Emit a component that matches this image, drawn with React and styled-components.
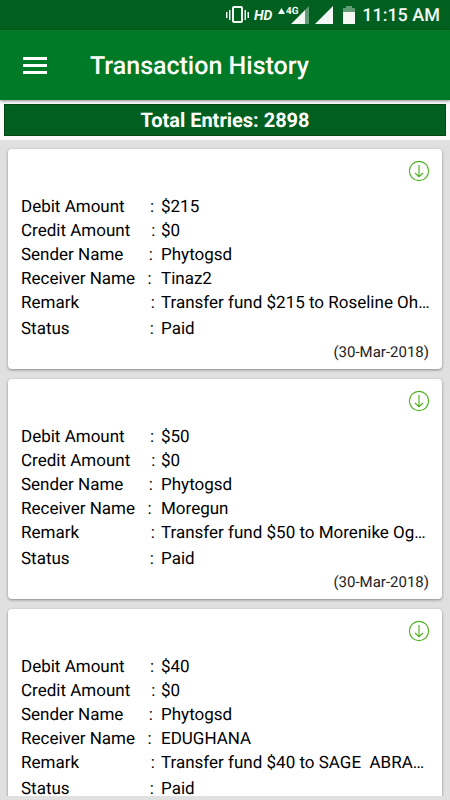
import React from "react";
import styled, { createGlobalStyle } from "styled-components";

const GlobalStyle = createGlobalStyle`
  * { box-sizing: border-box; }
  body {
    margin: 0;
    background: #e0e0e0;
    color: #000;
    font-family: Roboto, "Liberation Sans", sans-serif;
    text-rendering: geometricPrecision;
  }
`;

const Screen = styled.div`
  display: flex;
  flex-direction: column;
  height: 100vh;
  padding-bottom: 4px;
  overflow: hidden;
`;

const StatusBar = styled.div`
  display: flex;
  flex: none;
  align-items: center;
  justify-content: flex-end;
  height: 30px;
  padding-right: 10px;
  background: #01601f;
  color: #f4f8f5;
`;

const StatusIcons = styled.svg`
  display: block;
  width: 132px;
  height: 30px;
  margin-right: 4px;
`;

const Clock = styled.time`
  font-size: 18px;
  font-weight: 500;
  line-height: 30px;
  padding-top: 2px;
`;

const AppBar = styled.header`
  position: relative;
  display: flex;
  flex: none;
  align-items: center;
  gap: 35px;
  height: 70px;
  padding: 0 15px;
  background: #017a27;
  color: #fff;
  box-shadow: 0 1px 3px rgba(0, 0, 0, 0.45);
`;

const MenuButton = styled.button`
  display: flex;
  align-items: center;
  justify-content: center;
  width: 40px;
  height: 40px;
  padding: 0;
  border: 0;
  background: none;
  color: #fff;
`;

const Title = styled.h1`
  margin: 0;
  font-size: 25px;
  font-weight: 500;
  line-height: 32px;
  padding-top: 4px;
`;

const SummaryBand = styled.div`
  flex: none;
  padding: 4px;
  background: #fafafa;
`;

const Summary = styled.p`
  margin: 0;
  border: 1px solid #014713;
  background: #01601f;
  color: #fff;
  font-size: 20px;
  font-weight: 700;
  line-height: 30px;
  text-align: center;
`;

const List = styled.main`
  display: flex;
  flex: 1;
  flex-direction: column;
  gap: 10px;
  min-height: 0;
  padding: 9px 8px 0;
  overflow: hidden;
`;

const Card = styled.article`
  display: flex;
  flex: none;
  flex-direction: column;
  padding: 10px 4px 7px 13px;
  border-radius: 4px;
  background: #fff;
  box-shadow: 0 1px 3px rgba(0, 0, 0, 0.4);
`;

const DownloadButton = styled.button`
  display: block;
  align-self: flex-end;
  width: 24px;
  height: 24px;
  margin-right: 7px;
  padding: 0;
  border: 0;
  background: none;
  color: #4caf1c;
`;

const Details = styled.dl`
  display: grid;
  gap: 8px;
  margin: 16px 0 4px;
`;

const Row = styled.div`
  display: grid;
  grid-template-columns: 140px 1fr;
  padding-top: ${(p) => (p.$spaced ? "2px" : "0")};
  font-size: 17px;
  line-height: 16px;
`;

const Label = styled.dt`
  white-space: pre;
`;

const Value = styled.dd`
  min-width: 0;
  margin: 0;
  white-space: pre;
`;

const DateText = styled.time`
  align-self: flex-end;
  margin-right: 9px;
  color: #222;
  font-size: 15px;
  line-height: 20px;
  padding-top: 1px;
`;

const fields = [
  { key: "debit", label: "Debit Amount", gap: 6 },
  { key: "credit", label: "Credit Amount", gap: 5 },
  { key: "sender", label: "Sender Name", gap: 6 },
  { key: "receiver", label: "Receiver Name", gap: 3 },
  { key: "remark", label: "Remark", gap: 17 },
  { key: "status", label: "Status", gap: 19, spaced: true },
];

const entries = [
  {
    debit: "$215",
    credit: "$0",
    sender: "Phytogsd",
    receiver: "Tinaz2",
    remark: "Transfer fund $215 to Roseline Oh…",
    status: "Paid",
    date: "30-Mar-2018",
  },
  {
    debit: "$50",
    credit: "$0",
    sender: "Phytogsd",
    receiver: "Moregun",
    remark: "Transfer fund $50 to Morenike Og…",
    status: "Paid",
    date: "30-Mar-2018",
  },
  {
    debit: "$40",
    credit: "$0",
    sender: "Phytogsd",
    receiver: "EDUGHANA",
    remark: "Transfer fund $40 to SAGE  ABRA…",
    status: "Paid",
  },
];

function PhoneStatus() {
  return (
    <StatusIcons viewBox="226 0 132 30" fill="currentColor" aria-hidden="true">
      <rect x="233" y="7" width="9" height="15" rx="1" fill="none" stroke="currentColor" strokeWidth="2" />
      <path d="M226 12h1.5v6H226zM229 10h1.5v10H229zM244.500 10h1.500v10h-1.500zM247.500 12h1.500v6h-1.500z" />
      <text x="254" y="20" fontSize="14" fontWeight="700" fontStyle="italic">HD</text>
      <path d="M278 14l3.500-6 3.500 6z" />
      <text x="286" y="14" fontSize="10" fontWeight="700">4G</text>
      <path d="M291 24L305 10v14zM315 24L333 6v18z" />
      <path d="M305 10l4-4v18h-4z" opacity="0.4" />
      <path d="M343 12V8h3V6h6v2h3v4z" opacity="0.4" />
      <path d="M343 12h12v12h-12z" />
    </StatusIcons>
  );
}

function MenuIcon() {
  return (
    <svg width="24" height="17" viewBox="0 0 24 17" fill="currentColor" aria-hidden="true">
      <path d="M0 0h24v3H0zM0 7h24v3H0zM0 14h24v3H0z" />
    </svg>
  );
}

function DownloadIcon() {
  return (
    <svg width="24" height="24" viewBox="0 0 24 24" fill="none" stroke="currentColor" strokeWidth="1.100" aria-hidden="true">
      <circle cx="12" cy="12" r="9.600" />
      <path d="M12 6v11.500M8 14l4 3.700 4-3.700" />
    </svg>
  );
}

function Transaction({ entry }) {
  return (
    <Card>
      <DownloadButton type="button" aria-label="Download">
        <DownloadIcon />
      </DownloadButton>
      <Details>
        {fields.map((f) => (
          <Row key={f.key} $spaced={f.spaced}>
            <Label>{f.label + " ".repeat(f.gap) + ":"}</Label>
            <Value>{entry[f.key]}</Value>
          </Row>
        ))}
      </Details>
      {entry.date && <DateText>({entry.date})</DateText>}
    </Card>
  );
}

export default function App() {
  return (
    <>
      <GlobalStyle />
      <Screen>
        <StatusBar>
          <PhoneStatus />
          <Clock>11:15 AM</Clock>
        </StatusBar>
        <AppBar>
          <MenuButton type="button" aria-label="Menu">
            <MenuIcon />
          </MenuButton>
          <Title>Transaction History</Title>
        </AppBar>
        <SummaryBand>
          <Summary>Total Entries: 2898</Summary>
        </SummaryBand>
        <List>
          {entries.map((entry) => (
            <Transaction key={entry.receiver} entry={entry} />
          ))}
        </List>
      </Screen>
    </>
  );
}
